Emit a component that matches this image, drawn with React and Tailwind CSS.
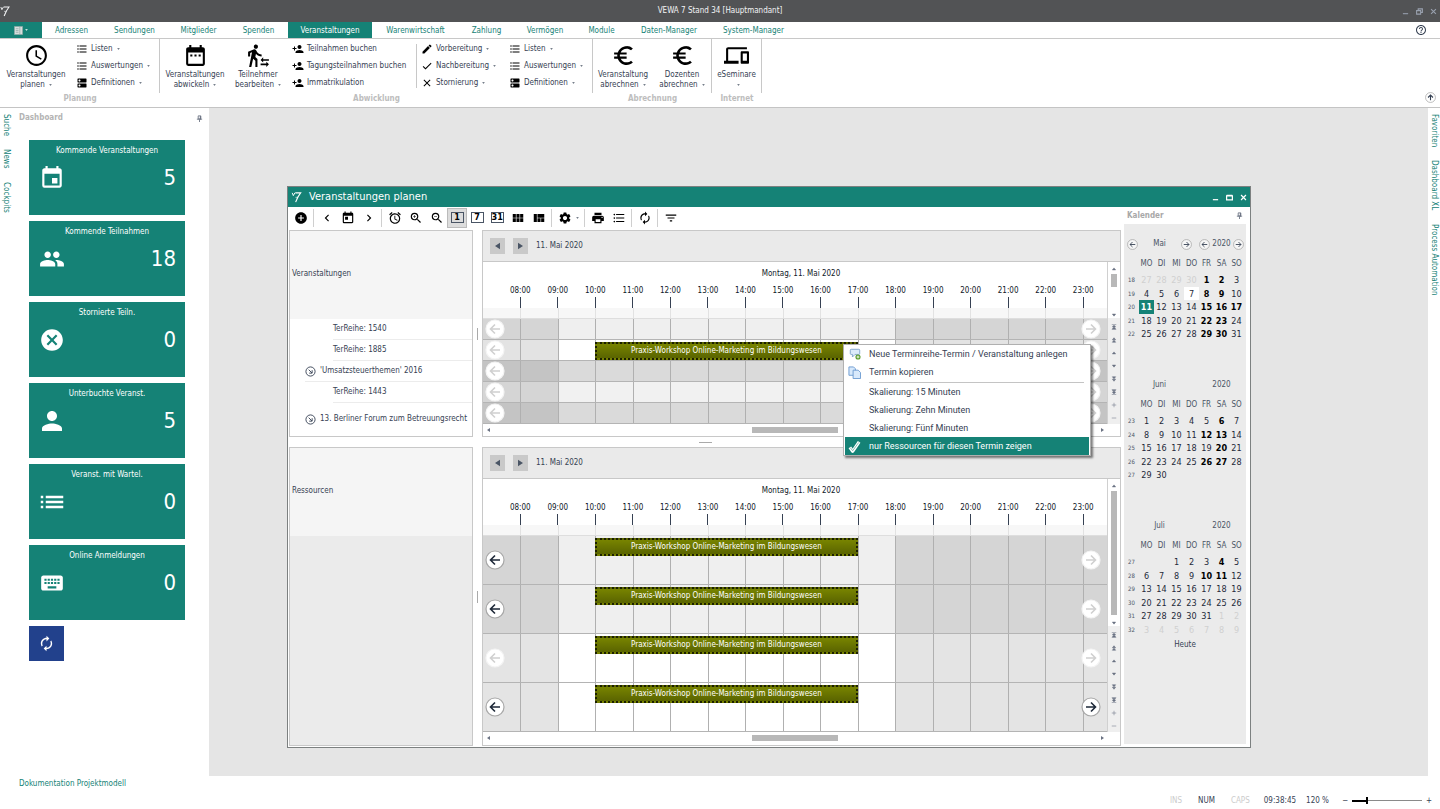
import React, { useState } from "react";
import {
  MdAccessTime, MdAddCircle, MdAlarm, MdAutorenew, MdCancel, MdCheck, MdChevronLeft, MdChevronRight,
  MdClose, MdCreate, MdDateRange, MdDevices, MdDns, MdEuroSymbol, MdEvent, MdFilterList,
  MdFormatListBulleted, MdHelpOutline, MdKeyboard, MdList, MdPeople, MdPerson, MdPersonAdd, MdPrint,
  MdSettings, MdToday, MdTransferWithinAStation, MdViewModule, MdViewQuilt, MdZoomIn, MdZoomOut,
} from "react-icons/md";

const tabs = [
  { label: "Adressen", width: "w-[59px]" },
  { label: "Sendungen", width: "w-[67px]" },
  { label: "Mitglieder", width: "w-[61px]" },
  { label: "Spenden", width: "w-[59px]" },
  { label: "Veranstaltungen", width: "w-[84px]" },
  { label: "Warenwirtschaft", width: "w-[87px]" },
  { label: "Zahlung", width: "w-[55px]" },
  { label: "Vermögen", width: "w-[62px]" },
  { label: "Module", width: "w-[51px]" },
  { label: "Daten-Manager", width: "w-[84px]" },
  { label: "System-Manager", width: "w-[85px]" },
];

const listMenu = [
  { icon: MdFormatListBulleted, label: "Listen", caret: true },
  { icon: MdFormatListBulleted, label: "Auswertungen", caret: true },
  { icon: MdDns, label: "Definitionen", caret: true },
];

const bookingMenu = [
  { icon: MdPersonAdd, label: "Teilnahmen buchen" },
  { icon: MdPersonAdd, label: "Tagungsteilnahmen buchen" },
  { icon: MdPersonAdd, label: "Immatrikulation" },
];

const stepMenu = [
  { icon: MdCreate, label: "Vorbereitung", caret: true },
  { icon: MdCheck, label: "Nachbereitung", caret: true },
  { icon: MdClose, label: "Stornierung", caret: true },
];

const tiles = [
  { title: "Kommende Veranstaltungen", icon: MdEvent, value: 5 },
  { title: "Kommende Teilnahmen", icon: MdPeople, value: 18 },
  { title: "Stornierte Teiln.", icon: MdCancel, value: 0 },
  { title: "Unterbuchte Veranst.", icon: MdPerson, value: 5, large: true },
  { title: "Veranst. mit Wartel.", icon: MdList, value: 0, large: true },
  { title: "Online Anmeldungen", icon: MdKeyboard, value: 0 },
];

const hours = Array.from({ length: 16 }, (_, i) => `${String(i + 8).padStart(2, "0")}:00`);
const WORKSHOP = "Praxis-Workshop Online-Marketing im Bildungswesen";

// off = outside of the working hours, on = 09:00 to 18:00
const eventRows = [
  { off: "bg-[#d5d5d5]", on: "bg-[#efefef]" },
  { off: "bg-[#e3e3e3]", on: "bg-white", event: WORKSHOP },
  { off: "bg-[#c4c4c4]", on: "bg-[#dadada]" },
  { off: "bg-[#d5d5d5]", on: "bg-[#f1f1f1]" },
  { off: "bg-[#c4c4c4]", on: "bg-[#dadada]" },
];

const resourceRows = [
  { off: "bg-[#d5d5d5]", on: "bg-[#efefef]", event: WORKSHOP, prev: true },
  { off: "bg-[#d5d5d5]", on: "bg-[#efefef]", event: WORKSHOP, prev: true },
  { off: "bg-[#e4e4e4]", on: "bg-white", event: WORKSHOP },
  { off: "bg-[#e4e4e4]", on: "bg-white", event: WORKSHOP, prev: true, next: true },
];

const months = [
  {
    name: "Mai", first: 18, bold: [1, 2, 8, 9, 15, 16, 17, 22, 23, 29, 30], today: 11, marked: 7, nav: true,
    weeks: [[-27, -28, -29, -30, 1, 2, 3], [4, 5, 6, 7, 8, 9, 10], [11, 12, 13, 14, 15, 16, 17], [18, 19, 20, 21, 22, 23, 24], [25, 26, 27, 28, 29, 30, 31]],
  },
  {
    name: "Juni", first: 23, bold: [6, 12, 13, 20, 26, 27],
    weeks: [[1, 2, 3, 4, 5, 6, 7], [8, 9, 10, 11, 12, 13, 14], [15, 16, 17, 18, 19, 20, 21], [22, 23, 24, 25, 26, 27, 28], [29, 30, 0, 0, 0, 0, 0]],
  },
  {
    name: "Juli", first: 27, bold: [4, 10, 11],
    weeks: [[0, 0, 1, 2, 3, 4, 5], [6, 7, 8, 9, 10, 11, 12], [13, 14, 15, 16, 17, 18, 19], [20, 21, 22, 23, 24, 25, 26], [27, 28, 29, 30, 31, -1, -2], [-3, -4, -5, -6, -7, -8, -9]],
  },
];

function Logo({ className }) {
  return (
    <svg viewBox="0 0 12 14" className={className} fill="none" stroke="currentColor">
      <path d="M1 2.2l1.3 3.2L4.2 2" strokeWidth="1.1" />
      <path d="M4.6 2.2h6.2C8.4 5.2 6.6 8.6 5 13" strokeWidth="1.3" />
      <path d="M4.8 7.4h3" strokeWidth="0.7" />
    </svg>
  );
}

function Pin() {
  return (
    <button aria-label="Anheften" className="text-gray-500">
      <svg viewBox="0 0 8 8" className="size-[7px]" fill="none" stroke="currentColor">
        <path d="M2.5 1h3v3.5h-3zM1 4.8h6M4 5v3" />
        <path d="M5 1v4" strokeWidth="1.2" />
      </svg>
    </button>
  );
}

function Caret() {
  return (
    <svg viewBox="0 0 4 3" className="inline-block w-[3px] h-[2px] ml-1 shrink-0 text-gray-600" fill="currentColor">
      <path d="M0 .5h4L2 2.6z" />
    </svg>
  );
}

function CircleArrow({ right, active, small, label }) {
  const size = small ? "size-[11px]" : "size-5";
  const tone = small ? "text-gray-700" : active ? "text-gray-800" : "text-[#d0d0d0]";
  return (
    <button aria-label={label} className={`${size} ${tone} shrink-0`}>
      <svg viewBox="0 0 20 20" className={`size-full ${right ? "rotate-180" : ""}`} fill="none">
        <circle cx="10" cy="10" r="9" fill={small ? "#f6f6f6" : "#fff"} stroke={active || small ? "#a8a8a8" : "#f4f4f4"} strokeWidth={small ? 1.4 : 1.2} />
        <path d="M15 10H5.5M10 5.5L5.5 10l4.5 4.5" stroke="currentColor" strokeWidth="1.6" />
      </svg>
    </button>
  );
}

function BigButton({ icon: Icon, lines, width }) {
  return (
    <button className={`${width} self-start mt-[2px] flex flex-col items-center text-center whitespace-nowrap`}>
      <Icon className="size-[25px] text-black mb-[2px]" />
      <span className="leading-[10px]">{lines[0]}</span>
      <span className="leading-[10px]">{lines[1]}<Caret /></span>
    </button>
  );
}

function SmallButtons({ items, width }) {
  return (
    <div className={`${width} h-[50px] grid grid-rows-3 whitespace-nowrap`}>
      {items.map((item) => (
        <button key={item.label} className="flex items-center">
          <item.icon className="size-3 text-black mr-[3px] shrink-0" />
          {item.label}
          {item.caret && <Caret />}
        </button>
      ))}
    </div>
  );
}

function RibbonGroup({ title, children }) {
  return (
    <section className="flex flex-col">
      <div className="flex h-[54px] pt-[2px] border-r border-[#c8c8c8]">{children}</div>
      <h2 className="flex-1 text-center font-bold text-[#bdbdbd] leading-3">{title}</h2>
    </section>
  );
}

function Ribbon() {
  return (
    <div className="flex h-[69px] border-b border-[#c4c4c4] shrink-0">
      <RibbonGroup title="Planung">
        <BigButton icon={MdAccessTime} lines={["Veranstaltungen", "planen"]} width="w-[72px]" />
        <SmallButtons items={listMenu} width="w-[83px] ml-1" />
      </RibbonGroup>
      <RibbonGroup title="Abwicklung">
        <BigButton icon={MdDateRange} lines={["Veranstaltungen", "abwickeln"]} width="w-[70px]" />
        <BigButton icon={MdTransferWithinAStation} lines={["Teilnehmer", "bearbeiten"]} width="w-[56px]" />
        <SmallButtons items={bookingMenu} width="w-[124px] ml-[6px]" />
        <div className="w-px h-11 bg-[#c8c8c8] mt-[3px]" />
        <SmallButtons items={stepMenu} width="w-[83px] ml-[4px]" />
        <SmallButtons items={listMenu} width="w-[83px] ml-[5px]" />
      </RibbonGroup>
      <RibbonGroup title="Abrechnung">
        <BigButton icon={MdEuroSymbol} lines={["Veranstaltung", "abrechnen"]} width="w-[60px]" />
        <BigButton icon={MdEuroSymbol} lines={["Dozenten", "abrechnen"]} width="w-[58px]" />
      </RibbonGroup>
      <RibbonGroup title="Internet">
        <BigButton icon={MdDevices} lines={["eSeminare", ""]} width="w-[49px]" />
      </RibbonGroup>
      <div className="flex-1 flex items-end justify-end p-1">
        <button aria-label="Menüband minimieren" className="size-[11px] text-gray-700">
          <svg viewBox="0 0 20 20" fill="none" stroke="currentColor">
            <circle cx="10" cy="10" r="9" stroke="#aaa" strokeWidth="1.4" />
            <path d="M10 15V5.5M5.5 10L10 5.5l4.5 4.5" strokeWidth="2" />
          </svg>
        </button>
      </div>
    </div>
  );
}

function Dashboard() {
  return (
    <aside className="w-[196px] shrink-0 bg-white">
      <div className="h-5 pl-[6px] pr-[6px] flex items-center justify-between">
        <h2 className="font-bold text-[#b4b4b4]">Dashboard</h2>
        <Pin />
      </div>
      <div className="pl-4 pt-3 pr-6 flex flex-col gap-[6px]">
        {tiles.map((tile) => (
          <button key={tile.title} className="h-[75px] bg-[#158276] text-white flex flex-col text-center">
            <span className="pt-[5px] leading-3 w-full">{tile.title}</span>
            <span className="flex items-center justify-between pl-2 pr-[9px] pt-1 w-full">
              <span className="size-[30px] grid place-items-center">
                <tile.icon className={tile.large ? "size-[30px]" : "size-[26px]"} />
              </span>
              <span className="text-[22px] leading-[34px]">{tile.value}</span>
            </span>
          </button>
        ))}
        <button aria-label="Aktualisieren" className="size-[35px] bg-[#22418c] text-white grid place-items-center">
          <MdAutorenew className="size-[17px]" />
        </button>
      </div>
    </aside>
  );
}

function ToolButton({ icon: Icon, label, caret }) {
  return (
    <button aria-label={label} className={`${caret ? "w-[28px]" : "w-[21px]"} h-5 flex items-center justify-center text-black`}>
      <Icon className="size-[14px]" />
      {caret && <Caret />}
    </button>
  );
}

function ViewButton({ text, active }) {
  return (
    <button className={`w-5 h-5 grid place-items-center ${active ? "bg-[#dcdcdc] border border-[#bbb]" : ""}`}>
      <span className="w-[13px] h-[11px] border border-gray-600 text-black font-bold text-[9px] leading-[9px]">{text}</span>
    </button>
  );
}

function Divider() {
  return <div className="w-px h-[18px] bg-[#cfcfcf] mx-[2px]" />;
}

function Toolbar() {
  return (
    <div className="h-[21px] mb-[2px] pl-[1px] flex items-center shrink-0">
      <ToolButton icon={MdAddCircle} label="Neu" />
      <Divider />
      <ToolButton icon={MdChevronLeft} label="Zurück" />
      <ToolButton icon={MdToday} label="Heute" />
      <ToolButton icon={MdChevronRight} label="Vor" />
      <Divider />
      <ToolButton icon={MdAlarm} label="Erinnerung" />
      <ToolButton icon={MdZoomIn} label="Vergrößern" />
      <ToolButton icon={MdZoomOut} label="Verkleinern" />
      <ViewButton text="1" active />
      <ViewButton text="7" />
      <ViewButton text="31" />
      <ToolButton icon={MdViewModule} label="Raster" />
      <ToolButton icon={MdViewQuilt} label="Kacheln" />
      <Divider />
      <ToolButton icon={MdSettings} label="Einstellungen" caret />
      <Divider />
      <ToolButton icon={MdPrint} label="Drucken" />
      <ToolButton icon={MdFormatListBulleted} label="Liste" />
      <Divider />
      <ToolButton icon={MdAutorenew} label="Aktualisieren" />
      <Divider />
      <ToolButton icon={MdFilterList} label="Filter" />
    </div>
  );
}

const navGlyphs = [
  "M1 .8h6M4 1.5L1.8 4h4.4zM4 4L1.8 6.5h4.4zM1 7.3h6",
  "M4 1L1.8 3.8h4.4zM4 4.2L1.8 7h4.4z",
  "M4 2.5L1.8 5.2h4.4z",
  "M4 5.5L1.8 2.8h4.4z",
  "M4 3.8L1.8 1h4.4zM4 7L1.8 4.2h4.4z",
  "M1 .8h6M4 4L1.8 1.5h4.4zM4 6.5L1.8 4h4.4zM1 7.3h6",
  "M4 1v6M1 4h6",
  "M1 4h6",
];

function Glyph({ d }) {
  return (
    <svg viewBox="0 0 8 8" className="size-[6px]" fill="currentColor" stroke="currentColor" strokeWidth="0.7">
      <path d={d} />
    </svg>
  );
}

function VerticalBar({ thumb }) {
  return (
    <div className="w-[13px] shrink-0 border-l border-[#d0d0d0] flex flex-col text-gray-500">
      <div className="flex-1 flex flex-col items-center pt-[4px]">
        <Glyph d={navGlyphs[2]} />
        <div className={`w-[6px] bg-[#b8b8b8] mt-[2px] ${thumb}`} />
        <div className="mt-auto"><Glyph d={navGlyphs[3]} /></div>
      </div>
      <div className="bg-[#efefef] flex flex-col items-center pt-[2px]">
        {navGlyphs.map((d) => (
          <button key={d} aria-label="Navigation" className="h-[13px] w-full grid place-items-center"><Glyph d={d} /></button>
        ))}
      </div>
    </div>
  );
}

function TimelineRow({ row, height }) {
  return (
    <div className={`${height} grid grid-cols-[74fr_repeat(15,75fr)_48fr] grid-rows-1 border-b border-[#b4b4b4]`}>
      {Array.from({ length: 17 }, (_, i) => (
        <div
          key={i}
          style={{ gridColumn: i + 1, gridRow: 1 }}
          className={`${i < 2 || i > 10 ? row.off : row.on} ${i ? "border-l border-[#b0b0b0]" : ""}`}
        />
      ))}
      {row.event && (
        <div className="col-start-4 col-span-7 row-start-1 self-start h-[18px] mt-[2px] border-2 border-dotted border-[#1c2000] bg-linear-to-b from-[#788400] to-[#5a6400] text-white text-center leading-[14px] whitespace-nowrap overflow-hidden">
          {row.event}
        </div>
      )}
      <div className="col-start-1 row-start-1 flex items-center pl-[2px]">
        <CircleArrow active={row.prev} label="Vorheriger Termin" />
      </div>
      <div className="col-start-16 col-span-2 row-start-1 flex items-center justify-end pr-[6px]">
        <CircleArrow right active={row.next} label="Nächster Termin" />
      </div>
    </div>
  );
}

function Timeline({ rows, height, thumb }) {
  return (
    <div className="flex-1 min-w-0 border border-[#c8c8c8] flex flex-col">
      <div className="h-[31px] bg-[#eaeaea] border-b border-[#c8c8c8] flex items-center pl-[7px] text-gray-600">
        <button aria-label="Tag zurück" className="w-[15px] h-4 bg-[#c9c9c9] grid place-items-center">
          <svg viewBox="0 0 6 8" className="w-[5px] h-2" fill="currentColor"><path d="M6 0v8L0 4z" /></svg>
        </button>
        <button aria-label="Tag vor" className="w-[15px] h-4 bg-[#c9c9c9] grid place-items-center ml-2 mr-2">
          <svg viewBox="0 0 6 8" className="w-[5px] h-2" fill="currentColor"><path d="M0 0v8l6-4z" /></svg>
        </button>
        <span className="text-gray-700">11. Mai 2020</span>
      </div>
      <div className="flex">
        <div className="flex-1 min-w-0">
          <div className="h-[23px] leading-[23px] pl-3 text-center text-gray-900">Montag, 11. Mai 2020</div>
          <div className="grid grid-cols-[37fr_repeat(16,75fr)_10fr] text-gray-900">
            {hours.map((hour, i) => (
              <div key={hour} className={`${i ? "" : "col-start-2"} min-w-0 flex flex-col items-center`}>
                <span className="leading-3">{hour}</span>
                <span className="w-px h-[11px] bg-gray-700" />
              </div>
            ))}
          </div>
          <div className="h-[11px] bg-[#f7f7f7] border-b border-[#dedede] grid grid-cols-[74fr_repeat(15,75fr)_48fr]">
            {Array.from({ length: 17 }, (_, i) => (
              <div key={i} className={i ? "border-l border-[#e2e2e2]" : ""} />
            ))}
          </div>
          {rows.map((row, i) => <TimelineRow key={i} row={row} height={height} />)}
        </div>
        <VerticalBar thumb={thumb} />
      </div>
      <div className="h-3 flex items-center pl-1 pr-4 text-gray-500">
        <svg viewBox="0 0 4 4" className="size-1" fill="currentColor"><path d="M3 0v4L0 2z" /></svg>
        <div className="w-[42%] h-full" />
        <div className="w-[86px] h-[6px] ml-[2px] bg-[#b8b8b8]" />
        <svg viewBox="0 0 4 4" className="size-1 ml-auto" fill="currentColor"><path d="M1 0v4l3-2z" /></svg>
      </div>
    </div>
  );
}

function ExpandIcon() {
  return (
    <svg viewBox="0 0 12 12" className="size-[11px] mr-1 shrink-0" fill="none" stroke="currentColor">
      <circle cx="6" cy="6" r="5" />
      <path d="M4 4l3.6 3.6M7.8 4.6v3.2H4.6" />
    </svg>
  );
}

function EventTree() {
  const item = "h-[21px] flex items-center border-b border-[#ececec]";
  return (
    <div className="w-[184px] shrink-0 border border-[#c8c8c8] bg-white text-gray-700 whitespace-nowrap">
      <div className="h-[88px] bg-[#f5f5f5] pl-[2px] leading-[86px]">Veranstaltungen</div>
      <div className={`${item} ml-[43px]`}>TerReihe: 1540</div>
      <div className={`${item} ml-[43px]`}>TerReihe: 1885</div>
      <button className={`${item} ml-[15px] w-[167px]`}><ExpandIcon />'Umsatzsteuerthemen' 2016</button>
      <div className={`${item} ml-[43px]`}>TerReihe: 1443</div>
      <button className="ml-[15px] h-8 flex items-center"><ExpandIcon />13. Berliner Forum zum Betreuungsrecht</button>
    </div>
  );
}

function Grip() {
  return (
    <div className="w-[9px] grid place-items-center shrink-0">
      <div className="w-px h-3 bg-[#aaa]" />
    </div>
  );
}

function Month({ month }) {
  return (
    <div className="h-[141px] pt-3 pr-[2px]">
      <div className="h-4 flex items-center text-gray-600 pl-[3px]">
        <div className="w-[65px] flex items-center justify-between">
          {month.nav ? <CircleArrow small label="Voriger Monat" /> : <span className="size-[11px]" />}
          <span>{month.name}</span>
          {month.nav ? <CircleArrow small right label="Nächster Monat" /> : <span className="size-[11px]" />}
        </div>
        <div className="flex-1 pl-[7px] flex items-center justify-between">
          {month.nav ? <CircleArrow small label="Voriges Jahr" /> : <span className="size-[11px]" />}
          <span>2020</span>
          {month.nav ? <CircleArrow small right label="Nächstes Jahr" /> : <span className="size-[11px]" />}
        </div>
      </div>
      <table className="w-full table-fixed text-center text-[9px] leading-3 mt-1 text-gray-800">
        <thead>
          <tr className="h-[17px] text-gray-600 text-[8px]">
            <th className="w-[15px] p-0" aria-label="Woche" />
            {["MO", "DI", "MI", "DO", "FR", "SA", "SO"].map((day) => <th key={day} className="p-0 pb-[2px] font-normal">{day}</th>)}
          </tr>
        </thead>
        <tbody>
          {month.weeks.map((week, w) => (
            <tr key={w} className="odd:h-[14px] even:h-[13px]">
              <td className="p-0 text-[6px] text-gray-600">{month.first + w}</td>
              {week.map((day, d) => (
                <td
                  key={d}
                  className={`p-0 ${day < 0 ? "text-[#d0d0d0]" : ""} ${month.bold.includes(day) ? "font-bold text-black" : ""} ${
                    day === month.today ? "bg-[#158276] text-white font-bold" : ""
                  } ${day === month.marked ? "bg-white" : ""}`}
                >
                  {day ? Math.abs(day) : ""}
                </td>
              ))}
            </tr>
          ))}
        </tbody>
      </table>
    </div>
  );
}

function Calendar() {
  return (
    <aside className="w-[122px] ml-[3px] mr-1 mb-[3px] shrink-0 flex flex-col">
      <div className="h-[17px] flex items-center justify-between pl-[3px] pr-[3px]">
        <h2 className="font-bold text-[#a8a8a8]">Kalender</h2>
        <Pin />
      </div>
      <div className="flex-1 bg-[#ebebeb]">
        {months.map((month) => <Month key={month.name} month={month} />)}
        <button className="block mx-auto -mt-2 text-gray-700">Heute</button>
      </div>
    </aside>
  );
}

function ContextMenu() {
  const item = "h-[18px] w-full flex items-center text-left whitespace-nowrap";
  return (
    <div role="menu" className="absolute left-[555px] top-[157px] w-[248px] px-px bg-white border border-[#b0b0b0] shadow-[2px_2px_2px_rgba(0,0,0,0.5)] font-['Roboto','Noto_Sans',sans-serif] text-[9px] text-gray-700">
      <button role="menuitem" className={item}>
        <svg viewBox="0 0 14 14" className="size-3 ml-1 mr-2 shrink-0" fill="none">
          <path d="M2.5 1.5h9a1 1 0 011 1v4a1 1 0 01-1 1H7L4 10.5v-3H2.5a1 1 0 01-1-1v-4a1 1 0 011-1z" fill="#dcebfa" stroke="#7ba0c8" />
          <circle cx="10.5" cy="10.5" r="3" fill="#5a9c2c" />
          <path d="M10.5 8.8v3.4M8.8 10.5h3.4" stroke="#fff" />
        </svg>
        Neue Terminreihe-Termin / Veranstaltung anlegen
      </button>
      <button role="menuitem" className={item}>
        <svg viewBox="0 0 14 14" className="size-[13px] ml-[3px] mr-2 shrink-0" fill="#d8e9fb" stroke="#6c9bd0">
          <path d="M1 1h5l2 2v7H1z" />
          <path d="M5.5 4.5H11l2.5 2.5v6.5h-8z" />
        </svg>
        Termin kopieren
      </button>
      <div className="h-px bg-[#c4c4c4] ml-6 mr-[5px] mt-px" />
      {["Skalierung: 15 Minuten", "Skalierung: Zehn Minuten", "Skalierung: Fünf Minuten"].map((label) => (
        <button key={label} role="menuitem" className={`${item} pl-6`}>{label}</button>
      ))}
      <button role="menuitem" className={`${item} bg-[#158276] text-white`}>
        <svg viewBox="0 0 14 14" className="size-[13px] ml-[3px] mr-2 shrink-0" fill="none">
          <path d="M2 8l3 4.2L12 2" stroke="#fff" strokeWidth="3.4" strokeLinejoin="round" />
          <path d="M2.4 8.2l2.6 3.4L11.6 2.6" stroke="#7fb8b0" strokeWidth="1" />
        </svg>
        nur Ressourcen für diesen Termin zeigen
      </button>
    </div>
  );
}

function PlannerWindow() {
  return (
    <div className="absolute left-[78px] top-[78px] w-[964px] h-[562px] bg-white border border-[#7c8080] flex flex-col">
      <div className="h-5 bg-[#158276] text-white flex items-center pl-[3px] shrink-0">
        <Logo className="w-[11px] h-3 mr-[7px]" />
        <h1 className="text-[11px]">Veranstaltungen planen</h1>
        <div className="ml-auto flex items-center">
          {["M1 6.5h6", "M.7 1.5h6.6M.7 2.2h6.6v4.6H.7z", "M1.2 1.2l5.6 5.6M6.8 1.2L1.2 6.8"].map((d) => (
            <button key={d} aria-label="Fenster" className="w-[14px] grid place-items-center">
              <svg viewBox="0 0 8 8" className="size-[7px]" fill="none" stroke="currentColor" strokeWidth="1.4"><path d={d} /></svg>
            </button>
          ))}
        </div>
      </div>
      <div className="flex-1 flex min-h-0">
        <div className="flex-1 min-w-0 flex flex-col pl-[1px] pb-[1px]">
          <Toolbar />
          <div className="flex">
            <EventTree />
            <Grip />
            <Timeline rows={eventRows} height="h-[21px]" thumb="h-[13px]" />
          </div>
          <div className="h-[10px] flex items-center justify-center shrink-0">
            <div className="w-[13px] h-px bg-[#aaa]" />
          </div>
          <div className="flex-1 flex">
            <div className="w-[184px] shrink-0 border border-[#c8c8c8] bg-[#ebebeb] text-gray-700">
              <div className="h-[88px] bg-[#f5f5f5] pl-[2px] leading-[86px]">Ressourcen</div>
            </div>
            <Grip />
            <Timeline rows={resourceRows} height="h-[49px]" thumb="h-[124px]" />
          </div>
        </div>
        <Calendar />
      </div>
      <ContextMenu />
    </div>
  );
}

function SideStrip({ items, width }) {
  return (
    <nav className={`${width} shrink-0 bg-white flex flex-col pt-[6px] gap-[13px] text-[#158276]`}>
      {items.map((label) => (
        <button key={label} className="[writing-mode:vertical-rl] leading-3 w-3">{label}</button>
      ))}
    </nav>
  );
}

function StatusBar() {
  const [zoom, setZoom] = useState(20);
  return (
    <footer className="h-[33px] shrink-0 flex justify-between pl-[19px] pr-2">
      <a href="#doku" className="text-[#158276] leading-[16px]">Dokumentation Projektmodell</a>
      <div className="self-end h-[17px] flex items-center gap-[10px] text-gray-700">
        <span className="text-[#ccc] mr-[6px]">INS</span>
        <span className="mr-[6px]">NUM</span>
        <span className="text-[#ccc] mr-1">CAPS</span>
        <span>09:38:45</span>
        <span>120 %</span>
        <div className="flex items-center gap-1 ml-[3px]">
          <span>−</span>
          <input
            type="range"
            aria-label="Zoom"
            value={zoom}
            onChange={(e) => setZoom(Number(e.target.value))}
            className="appearance-none w-[70px] h-[7px] bg-[linear-gradient(#000,#000),linear-gradient(#8a8a8a,#8a8a8a)] bg-[length:14px_2px,100%_1px] bg-no-repeat bg-left [&::-webkit-slider-thumb]:appearance-none [&::-webkit-slider-thumb]:w-[2px] [&::-webkit-slider-thumb]:h-[7px] [&::-webkit-slider-thumb]:bg-black"
          />
          <span>+</span>
        </div>
      </div>
    </footer>
  );
}

export default function App() {
  return (
    <div className="min-h-screen flex flex-col bg-white font-['DejaVu_Sans_Condensed','DejaVu_Sans',sans-serif] text-[8px] leading-3 text-gray-700">
      <header className="h-[22px] bg-[#525355] text-gray-100 flex items-center shrink-0">
        <Logo className="w-[10px] h-3" />
        <div className="flex-1 text-center pl-8">VEWA 7 Stand 34 [Hauptmandant]</div>
        <div className="flex items-center text-gray-400">
          {["M1 6.5h6", "M.7 3h4.6v4H.7zM2.5 3V1h4.8v4H5.5", "M1.2 1.2l5.6 5.6M6.8 1.2L1.2 6.8"].map((d) => (
            <button key={d} aria-label="Fenster" className="w-[14px] grid place-items-center">
              <svg viewBox="0 0 8 8" className="size-[7px]" fill="none" stroke="currentColor" strokeWidth="1.2"><path d={d} /></svg>
            </button>
          ))}
        </div>
      </header>

      <nav className="h-[17px] flex border-b border-[#c8c8c8] shrink-0 text-[#158276]">
        <button aria-label="Datei" className="w-[42px] bg-[#158276] text-white flex items-center justify-center">
          <svg viewBox="0 0 10 10" className="size-[9px]" fill="#d8dedd" stroke="#8fa8a4" strokeWidth="0.8">
            <path d="M.5.5h9v9h-9zM6.5.5v9M2 3h3M2 5h3M2 7h3" />
          </svg>
          <svg viewBox="0 0 4 3" className="w-[3px] h-[2px] ml-[2px]" fill="currentColor"><path d="M0 .5h4L2 2.6z" /></svg>
        </button>
        {tabs.map((tab) => (
          <button
            key={tab.label}
            className={`${tab.width} pt-[2px] whitespace-nowrap ${tab.label === "Veranstaltungen" ? "bg-[#158276] text-white" : ""}`}
          >
            {tab.label}
          </button>
        ))}
        <button aria-label="Hilfe" className="ml-auto mr-[13px] text-gray-700"><MdHelpOutline className="size-3" /></button>
      </nav>

      <Ribbon />

      <main className="flex-1 flex min-h-0">
        <SideStrip items={["Suche", "News", "Cockpits"]} width="w-[13px]" />
        <Dashboard />
        <div className="relative flex-1 min-w-0 bg-[#e5e5e5]">
          <PlannerWindow />
        </div>
        <SideStrip items={["Favoriten", "Dashboard XL", "Process Automation"]} width="w-3" />
      </main>

      <StatusBar />
    </div>
  );
}
